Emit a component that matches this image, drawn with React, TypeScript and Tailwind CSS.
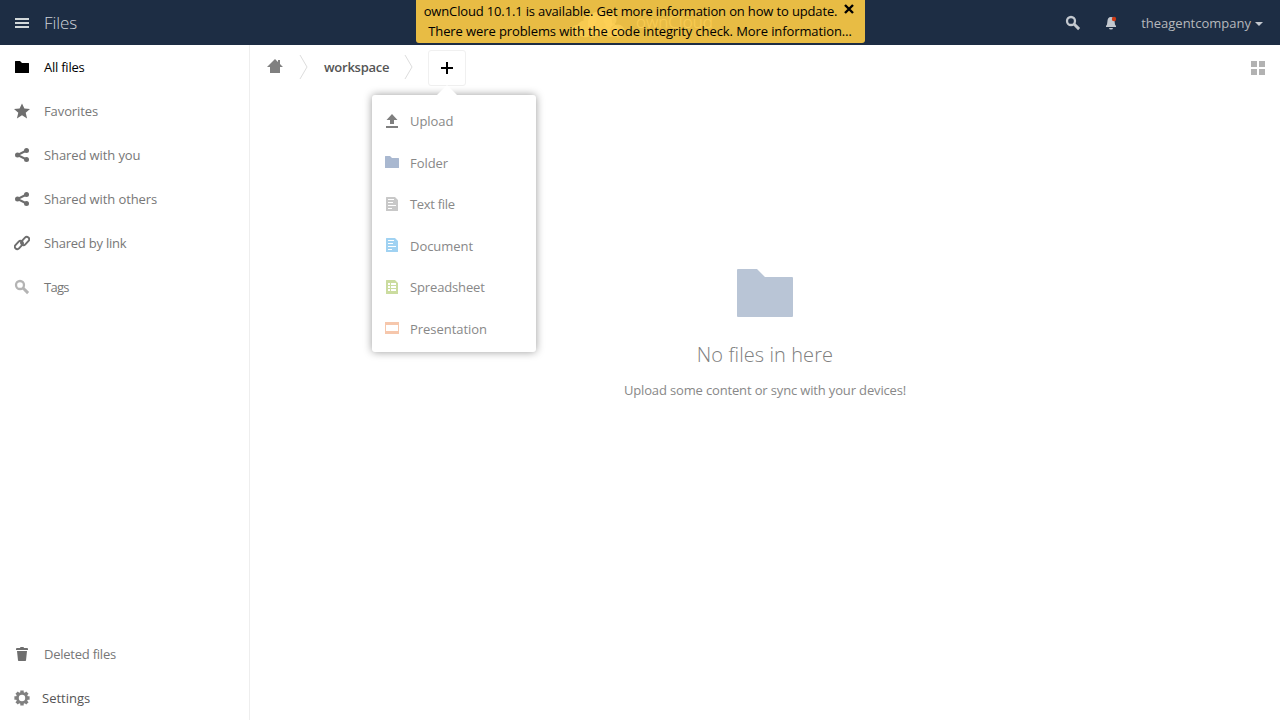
import type { ReactNode } from "react";

function Svg({ children, className = "" }: { children: ReactNode; className?: string }) {
  return (
    <svg viewBox="0 0 16 16" className={"size-4 shrink-0 " + className} fill="currentColor">
      {children}
    </svg>
  );
}

const Folder = ({ className = "" }: { className?: string }) => (
  <Svg className={className}>
    <path d="M1.500 2a.5.5 0 0 0-.5.5v11a.5.5 0 0 0 .5.5h13a.5.5 0 0 0 .5-.5v-9a.5.5 0 0 0-.5-.5H8L6 2z" />
  </Svg>
);
const Share = () => (
  <Svg>
    <circle cx="3.500" cy="8" r="2.500" />
    <circle cx="12.500" cy="3.500" r="2.500" />
    <circle cx="12.500" cy="12.500" r="2.500" />
    <path d="M12.500 3.500L3.500 8l9 4.500" fill="none" stroke="currentColor" strokeWidth="2" />
  </Svg>
);
const Search = ({ className = "" }: { className?: string }) => (
  <Svg className={className}>
    <circle cx="6" cy="6" r="4" fill="none" stroke="currentColor" strokeWidth="2.300" />
    <path d="M8.800 8.800l5.300 5.300" stroke="currentColor" strokeWidth="2.900" />
  </Svg>
);
const Star = () => (
  <Svg>
    <path d="M8 .4l2.400 5.100 5.600.5-4.300 3.700 1.400 5.700L8 12.300l-5.100 3.100 1.400-5.700L0 6l5.600-.5z" />
  </Svg>
);
const LinkIcon = () => (
  <Svg>
    <g fill="none" stroke="currentColor" strokeWidth="1.900" transform="rotate(-48 8 8)">
      <rect x="-.4" y="4.600" width="9.600" height="4.800" rx="2.400" />
      <rect x="6.800" y="6.600" width="9.600" height="4.800" rx="2.400" />
    </g>
  </Svg>
);
const Trash = () => (
  <Svg>
    <path d="M6.500 1L6 2H2.500L2 3v1h12V3l-.5-1H10l-.5-1zM3 5l1 9.500.6.500h6.800l.6-.5L13 5z" />
  </Svg>
);
const Gear = () => (
  <svg viewBox="0 0 16 16" className="size-4 shrink-0">
    <g stroke="currentColor" strokeWidth="3.400">
      <path d="M8 .4v3M8 12.600v3M.4 8h3M12.600 8h3M2.600 2.600l2.200 2.200M11.200 11.200l2.200 2.200M13.400 2.600l-2.200 2.200M4.800 11.200l-2.200 2.200" />
    </g>
    <circle cx="8" cy="8" r="4.600" fill="none" stroke="currentColor" strokeWidth="2.800" />
  </svg>
);
const Upload = () => (
  <Svg>
    <path d="M8 1L2.500 7H6v4h4V7h3.500zM2 13v2h12v-2z" />
  </Svg>
);
const TextFile = ({ className = "" }: { className?: string }) => (
  <Svg className={className}>
    <path d="M2.500 1a.5.5 0 0 0-.5.5v13a.5.5 0 0 0 .5.5h11a.5.5 0 0 0 .5-.5V4l-3-3z" />
    <path fill="#fff" d="M4 3h6v1H4zM4 6h5v1H4zM4 9h8v1H4zM4 12h4v1H4z" />
  </Svg>
);
const Sheet = () => (
  <Svg className="text-[#cbdc9f]">
    <path d="M2.500 1a.5.5 0 0 0-.5.5v13a.5.5 0 0 0 .5.5h11a.5.5 0 0 0 .5-.5V4l-3-3z" />
    <path fill="#fff" d="M4 4h2v2H4zM7 4h5v2H7zM4 7h2v2H4zM7 7h5v2H7zM4 10h2v2H4zM7 10h5v2H7z" />
  </Svg>
);
const Slides = () => (
  <Svg className="text-[#f6c7ac]">
    <path fillRule="evenodd" d="M1 2h14v12H1zM2 5v6h12V5z" />
  </Svg>
);

function NavItem({ icon, label, active = false, className = "tracking-[-0.1px]" }: { icon: ReactNode; label: string; active?: boolean; className?: string }) {
  return (
    <li className={"flex h-11 items-center gap-3.5 pl-3.5 " + className + (active ? " text-black" : " text-[#6e6e6e]")}>
      {icon}
      <span className={active ? "" : "text-[#777]"}>{label}</span>
    </li>
  );
}

function MenuItem({ icon, label, className = "tracking-[-0.04px]" }: { icon: ReactNode; label: string; className?: string }) {
  return (
    <li className={"flex h-[41.5px] items-center gap-2.5 pl-3 text-[#7f7f7f] " + className}>
      {icon}
      <span className="pt-px text-[#888]">{label}</span>
    </li>
  );
}

const Chevron = () => (
  <svg viewBox="0 0 10 26" className="h-[26px] w-2.5 shrink-0" fill="none" stroke="#ddd">
    <path d="M1 1l7 12-7 12" />
  </svg>
);

export default function App() {
  return (
    <div className="flex h-screen flex-col overflow-hidden bg-white font-['Open_Sans',sans-serif] text-[13px] leading-5">
      <header className="relative flex h-[45px] shrink-0 items-center bg-[#1d2d44] pl-3.5">
        <Svg className="text-[#d2d8da]">
          <path d="M1 3h14v2H1zM1 7h14v2H1zM1 11h14v2H1z" />
        </Svg>
        <h1 className="ml-3.5 text-[17px] font-light tracking-[-0.1px] text-[#ced2d8]">Files</h1>
        <div className="absolute top-0 left-[571px] flex h-[43px] items-center gap-[11px] text-white">
          <svg viewBox="0 0 54 32" className="h-8 w-[54px]" fill="currentColor">
            <g opacity=".65">
              <circle cx="19" cy="14" r="6.500" />
              <circle cx="39" cy="14" r="6.500" />
              <circle cx="6" cy="25" r="6" />
              <circle cx="14" cy="23" r="8.500" />
              <circle cx="47" cy="25" r="6.500" />
            </g>
            <circle cx="29" cy="17" r="12" opacity=".8" />
            <circle cx="22" cy="26" r="5.500" opacity=".6" />
            <circle cx="40" cy="24" r="7" opacity=".6" />
          </svg>
          <span className="text-[17px] font-light text-white/80">ownCloud</span>
        </div>
        <div className="ml-auto flex items-center pr-[17px] text-[#c3c8cf]">
          <Search />
          <svg viewBox="0 0 16 16" className="ml-[22px] size-4" fill="currentColor">
            <path d="M8 2C5.500 2 4.500 4 4.400 6.500L4 9.500 3 11v1h10v-1l-1-1.500-.4-3C11.500 4 10.500 2 8 2zM6 13a2 1.600 0 0 0 4 0z" />
            <circle cx="11" cy="4" r="2.200" fill="#ce3a14" />
          </svg>
          <span className="ml-[22px] text-[#b6b8bc]">theagentcompany</span>
          <svg viewBox="0 0 8 4" className="mt-0.5 ml-1 h-1 w-2" fill="currentColor"><path d="M0 0h8L4 4z" /></svg>
        </div>
        <div className="absolute top-0 left-[416px] z-10 h-[43px] w-[449px] rounded-b-[3px] bg-[#ffcc44]/90 pt-px text-center text-black">
          <p className="flex justify-center pr-[20px] tracking-[-0.148px] whitespace-nowrap">ownCloud 10.1.1 is available. Get more information on how to update.</p>
          <p className="pr-px tracking-[-0.1px] whitespace-nowrap">There were problems with the code integrity check. More information…</p>
          <svg viewBox="0 0 10 10" className="absolute top-1 right-[11px] size-2.5" stroke="#000" strokeWidth="2.400"><path d="M1 1l8 8M9 1L1 9" /></svg>
        </div>
      </header>

      <div className="flex min-h-0 flex-1">
        <nav className="flex w-[250px] shrink-0 flex-col justify-between border-r border-[#eee]">
          <ul>
            <NavItem icon={<Folder />} label="All files" active className="tracking-[-0.24px]" />
            <NavItem icon={<Star />} label="Favorites" />
            <NavItem icon={<Share />} label="Shared with you" />
            <NavItem icon={<Share />} label="Shared with others" />
            <NavItem icon={<LinkIcon />} label="Shared by link" className="tracking-[-0.22px]" />
            <NavItem icon={<Search className="text-[#b4b4b4]" />} label="Tags" className="tracking-[-0.7px]" />
          </ul>
          <ul>
            <NavItem icon={<Trash />} label="Deleted files" className="tracking-[-0.24px]" />
            <li className="flex h-11 items-center gap-3 pl-3.5 text-[#808080]">
              <Gear />
              <span className="text-[#555]">Settings</span>
            </li>
          </ul>
        </nav>

        <main className="flex flex-1 flex-col">
          <div className="flex h-[46px] items-center pr-3.5 pl-4">
            <svg viewBox="0 0 18 16" className="mb-1 h-4 w-[18px] text-[#808080]" fill="currentColor">
              <path d="M9 1L1 9h3v6h10V9h3l-3-3V2h-2v2z" />
            </svg>
            <div className="mb-0.5 ml-[15px] flex"><Chevron /></div>
            <span className="mb-0.5 ml-[15px] w-[65px] font-semibold tracking-[-0.25px] text-[#555]">workspace</span>
            <div className="mb-0.5 ml-[15px] flex"><Chevron /></div>
            <div className="relative ml-[14px] flex h-9 w-[38px] items-center justify-center rounded-[3px] border border-[#f0f0f0]">
              <svg viewBox="0 0 12 12" className="size-3"><path d="M5 0h2v5h5v2H7v5H5V7H0V5h5z" /></svg>
              <div className="absolute top-11 -left-[57px] z-10 w-[164px] rounded-[3px] bg-white pt-[5px] pb-[3px] shadow-[0_0_8px_rgba(0,0,0,0.4)]">
                <svg viewBox="0 0 20 10" className="absolute -top-2.5 left-[65px] h-2.5 w-5" fill="#fff"><path d="M10 0l10 10H0z" /></svg>
                <ul>
                  <MenuItem icon={<Upload />} label="Upload" />
                  <MenuItem icon={<Folder className="text-[#a9b8d0]" />} label="Folder" />
                  <MenuItem icon={<TextFile className="text-[#c8c8c8]" />} label="Text file" className="tracking-[-0.3px]" />
                  <MenuItem icon={<TextFile className="text-[#a0d2f2]" />} label="Document" />
                  <MenuItem icon={<Sheet />} label="Spreadsheet" className="tracking-[-0.14px]" />
                  <MenuItem icon={<Slides />} label="Presentation" />
                </ul>
              </div>
            </div>
            <Svg className="ml-auto text-[#b2b2b2]">
              <path d="M1 1h6v6H1zM9 1h6v6H9zM1 9h6v6H1zM9 9h6v6H9z" />
            </Svg>
          </div>
          <section className="flex flex-col items-center pt-[170px]">
            <svg viewBox="0 0 64 64" className="size-16 text-[#b9c5d6]" fill="currentColor">
              <path d="M5 8a1 1 0 0 0-1 1v46a1 1 0 0 0 1 1h54a1 1 0 0 0 1-1V17a1 1 0 0 0-1-1H32l-8-8z" />
            </svg>
            <h2 className="mt-4 text-[20px] leading-7 font-light tracking-[0.08px] text-[#808080]">No files in here</h2>
            <p className="mt-[11px] tracking-[-0.15px] text-[#888]">Upload some content or sync with your devices!</p>
          </section>
        </main>
      </div>
    </div>
  );
}
